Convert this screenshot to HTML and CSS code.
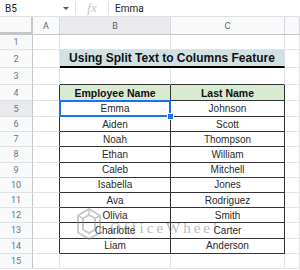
FILE: index.html
```html
<!DOCTYPE html>
<html>
<head>
  <title>Split Text to Columns</title>
  <meta charset="UTF-8" />
  <link rel="stylesheet" href="styles.css">
</head>
<body>
  <div class="formula-bar">
    <div class="namebox"><span>B5</span><span class="caret"></span></div>
    <div class="fx">fx</div>
    <div class="fval">Emma</div>
  </div>

  <div class="sheet">
    <div class="row head">
      <div class="corner"></div><div class="col">A</div><div class="col sel">B</div><div class="col">C</div><div class="col"></div>
    </div>
    <div class="row r1"><div class="num">1</div><div class="c"></div><div class="c"></div><div class="c"></div><div class="c"></div></div>
    <div class="row r2"><div class="num">2</div><div class="c"></div><div class="c title">Using Split Text to Columns Feature</div><div class="c"></div></div>
    <div class="row r3"><div class="num">3</div><div class="c"></div><div class="c tt"></div><div class="c tt"></div><div class="c"></div></div>
    <div class="row r4"><div class="num">4</div><div class="c tl"></div><div class="c t th">Employee Name</div><div class="c t th">Last Name</div><div class="c"></div></div>
    <div class="row r5"><div class="num cur">5</div><div class="c tl"></div><div class="c t active">Emma</div><div class="c t">Johnson</div><div class="c"></div></div>
    <div class="row"><div class="num">6</div><div class="c tl"></div><div class="c t">Aiden</div><div class="c t">Scott</div><div class="c"></div></div>
    <div class="row"><div class="num">7</div><div class="c tl"></div><div class="c t">Noah</div><div class="c t">Thompson</div><div class="c"></div></div>
    <div class="row"><div class="num">8</div><div class="c tl"></div><div class="c t">Ethan</div><div class="c t">William</div><div class="c"></div></div>
    <div class="row"><div class="num">9</div><div class="c tl"></div><div class="c t">Caleb</div><div class="c t">Mitchell</div><div class="c"></div></div>
    <div class="row"><div class="num">10</div><div class="c tl"></div><div class="c t">Isabella</div><div class="c t">Jones</div><div class="c"></div></div>
    <div class="row"><div class="num">11</div><div class="c tl"></div><div class="c t">Ava</div><div class="c t">Rodriguez</div><div class="c"></div></div>
    <div class="row"><div class="num">12</div><div class="c tl"></div><div class="c t">Olivia</div><div class="c t">Smith</div><div class="c"></div></div>
    <div class="row"><div class="num">13</div><div class="c tl"></div><div class="c t">Charlotte</div><div class="c t">Carter</div><div class="c"></div></div>
    <div class="row"><div class="num">14</div><div class="c tl"></div><div class="c t">Liam</div><div class="c t">Anderson</div><div class="c"></div></div>
    <div class="row"><div class="num">15</div><div class="c"></div><div class="c"></div><div class="c"></div><div class="c"></div></div>
  </div>

  <!-- watermark -->
  <div class="watermark">
    <svg width="26" height="34" viewBox="0 0 26 34">
      <path d="M13 2 L24 8.5 L24 25.5 L13 32 L2 25.5 L2 8.5 Z" fill="none" stroke="#8a8a8a" stroke-width="2"/>
      <path d="M13 8 L19 11.5 L19 22.5 L13 26 L7 22.5 L7 11.5 Z" fill="none" stroke="#8a8a8a" stroke-width="2"/>
      <path d="M13 2 L13 8 M24 8.5 L19 11.5 M2 8.5 L7 11.5" stroke="#8a8a8a" stroke-width="1.5"/>
    </svg>
    <span class="wm-text">OfficeWheel</span>
  </div>
</body>
</html>
```

FILE: styles.css
```css
body {
  margin: 0;
  width: 300px;
  height: 270px;
  overflow: hidden;
  background: #fff;
  font-family: Roboto, "Liberation Sans", sans-serif;
  position: relative;
}

/* formula bar */
.formula-bar {
  display: flex;
  align-items: center;
  height: 17px;
  box-sizing: border-box;
  border-bottom: 1px solid #e1e1e1;
}

.namebox {
  width: 76px;
  height: 13px;
  box-sizing: border-box;
  padding: 0 6px 0 5px;
  display: flex;
  align-items: center;
  justify-content: space-between;
  border-right: 1px solid #e1e1e1;
  font-size: 10px;
  color: #222;
}

.caret {
  border-left: 3px solid transparent;
  border-right: 3px solid transparent;
  border-top: 3px solid #555;
}

.fx {
  width: 32px;
  height: 13px;
  line-height: 12px;
  text-align: center;
  font-family: "Liberation Serif", serif;
  font-style: italic;
  font-size: 13px;
  color: #c4c4c4;
  border-right: 1px solid #e1e1e1;
}

.fval {
  padding-left: 6px;
  font-size: 10px;
  color: #222;
}

/* grid */
.row {
  display: grid;
  grid-template-columns: 33px 27px 111px 114px 1fr;
  height: 15.2px;
}

.row.head { height: 18px; }
.row.r1 { height: 15px; }
.row.r2 { height: 18px; }
.row.r3 { height: 17px; }
.row.r4 { height: 16px; }
.row.r5 { height: 16px; }

.row > div {
  box-sizing: border-box;
  border-right: 1px solid #e2e3e3;
  border-bottom: 1px solid #e2e3e3;
  display: flex;
  align-items: center;
  justify-content: center;
  overflow: hidden;
  white-space: nowrap;
}

.corner {
  background: #f8f9fa;
  border-right: 2px solid #c4c7c5 !important;
  border-bottom: 3px solid #c4c7c5 !important;
}

.col {
  background: #f8f9fa;
  font-size: 9px;
  color: #5f6368;
  border-right-color: #d5d7da !important;
  border-bottom-color: #c4c7c5 !important;
}

.col.sel { background: #e8eaed; }

.num {
  background: #f8f9fa;
  font-size: 9px;
  color: #6f7378;
  border-right-color: #c4c7c5 !important;
  border-bottom-color: #dfe1e3 !important;
}

.num.cur { background: #e8eaed; }

/* title */
.c.title {
  grid-column: span 2;
  background: #d0e0e3;
  border-bottom: 2px solid #000;
  border-right-color: #d0e0e3;
  font-family: "Liberation Sans", Arial, sans-serif;
  font-weight: bold;
  font-size: 12px;
  color: #111;
}

/* table */
.c.tt { border-bottom-color: #333; }
.c.tl { border-right-color: #333; }

.c.t {
  border-right-color: #333;
  border-bottom-color: #333;
  font-family: "Liberation Sans", Arial, sans-serif;
  font-size: 10px;
  color: #2a2a2a;
}

.c.th {
  background: #d9ead3;
  font-weight: bold;
  font-size: 10.5px;
  color: #111;
}

.c.active {
  position: relative;
  overflow: visible;
}

.c.active::after {
  content: "";
  position: absolute;
  top: -1px;
  left: -1px;
  right: -1px;
  bottom: -1px;
  border: 2px solid #1a73e8;
}

.c.active::before {
  content: "";
  position: absolute;
  right: -4px;
  bottom: -4px;
  width: 5px;
  height: 5px;
  background: #1a73e8;
  border: 1px solid #fff;
  z-index: 1;
}

/* watermark */
.watermark {
  position: absolute;
  left: 76px;
  top: 207px;
  display: flex;
  align-items: center;
  gap: 8px;
  opacity: 0.45;
  pointer-events: none;
}

.wm-text {
  font-family: "Liberation Serif", serif;
  font-size: 15px;
  letter-spacing: 3px;
  color: #666;
  padding-top: 8px;
}
```
